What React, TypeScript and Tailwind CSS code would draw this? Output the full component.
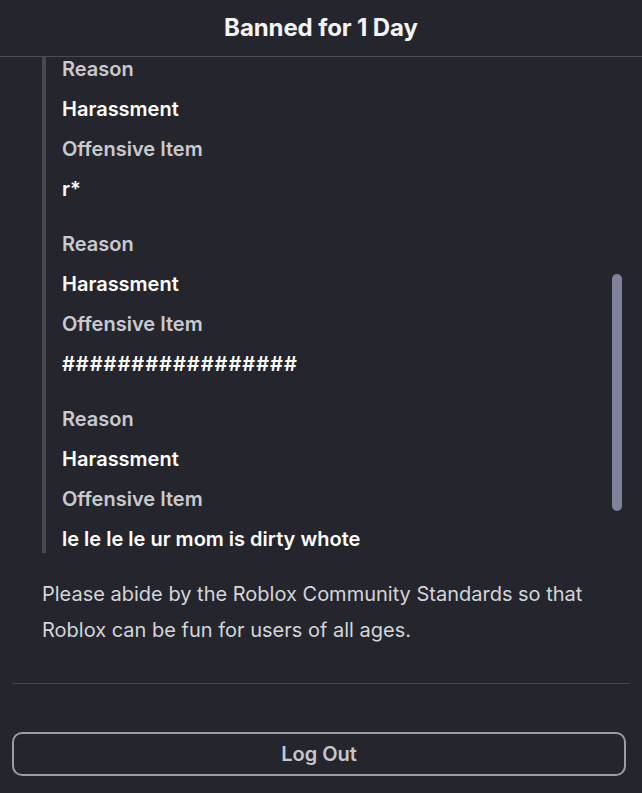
const violations = [
  { reason: 'Harassment', item: 'r*' },
  { reason: 'Harassment', item: '#################' },
  { reason: 'Harassment', item: 'le le le le ur mom is dirty whote' },
]

export default function App() {
  return (
    <div className="w-[642px] h-[793px] bg-[#25262d] flex flex-col overflow-hidden font-['Inter',sans-serif]">
      {/* header */}
      <div className="h-[57px] shrink-0 flex items-center justify-center border-b border-[#4b4c53]">
        <h1 className="text-[24px] font-bold text-[#f4f4f5] tracking-[-0.1px]">Banned for 1 Day</h1>
      </div>

      {/* scrolling body */}
      <div className="relative flex-1 overflow-hidden">
        <div className="px-[42px] -mt-[2px]">
          <div className="border-l-4 border-[#484953] pl-[16px] flex flex-col gap-[27px]">
            {violations.map((v, i) => (
              <div key={i} className="flex flex-col gap-[12px] text-[20px] leading-[28px] font-semibold">
                <div className="text-[#c9cacf]">Reason</div>
                <div className="text-white">{v.reason}</div>
                <div className="text-[#c9cacf]">Offensive Item</div>
                <div className={v.item.startsWith('#') ? 'text-white tracking-[1px]' : 'text-white'}>{v.item}</div>
              </div>
            ))}
          </div>
          <p className="mt-[23px] text-[20px] leading-[36px] text-[#d4d5d9] font-normal">
            Please abide by the Roblox Community Standards so that Roblox can be fun for users of all ages.
          </p>
        </div>
        <div className="mt-[35px] mx-[12px] border-t border-[#45464d]" />

        {/* scrollbar */}
        <div className="absolute left-[612px] top-[217px] w-[10px] h-[237px] rounded-full bg-[#7f8299]" />
      </div>

      {/* footer */}
      <div className="px-[12px] pb-[17px] shrink-0">
        <button className="w-[614px] h-[44px] rounded-[10px] border-2 border-[#9c9da2] text-[20px] font-semibold text-[#c6c7cb]">
          Log Out
        </button>
      </div>
    </div>
  )
}
